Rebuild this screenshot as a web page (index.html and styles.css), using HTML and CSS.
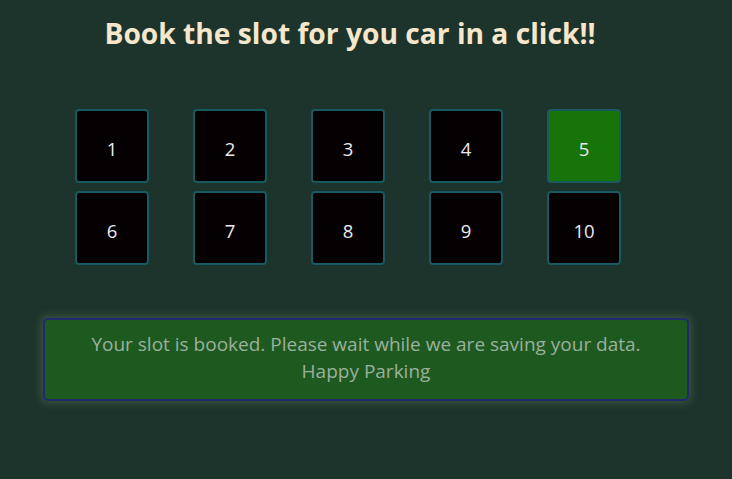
FILE: index.html
```html
<!DOCTYPE html>
<html>
<head>
<meta charset="utf-8">
<link rel="stylesheet" href="styles.css">
</head>
<body>
<div class="page">
  <h1 class="title">Book the slot for you car in a click!!</h1>
  <div class="slots">
    <div class="slot">1</div>
    <div class="slot">2</div>
    <div class="slot">3</div>
    <div class="slot">4</div>
    <div class="slot booked">5</div>
    <div class="slot">6</div>
    <div class="slot">7</div>
    <div class="slot">8</div>
    <div class="slot">9</div>
    <div class="slot">10</div>
  </div>
  <div class="message">Your slot is booked. Please wait while we are saving your data.<br>Happy Parking</div>
</div>
</body>
</html>
```
FILE: styles.css
```css
html, body {
  margin: 0;
  padding: 0;
  background: #1d342c;
  height: 100%;
}
.page {
  font-family: "Open Sans", "Noto Sans", sans-serif;
  padding-top: 14px;
}
.title {
  width: 700px;
  margin: 0;
  text-align: center;
  font-size: 28.2px;
  line-height: 38px;
  font-weight: 700;
  color: #f6e7cc;
}
.slots {
  display: grid;
  grid-template-columns: repeat(5, 74px);
  grid-auto-rows: 74px;
  column-gap: 44px;
  row-gap: 8px;
  margin: 57px 0 0 75px;
}
.slot {
  box-sizing: border-box;
  border: 2px solid #185a60;
  border-radius: 4px;
  background: #050103;
  color: #eceaf0;
  font-size: 18.5px;
  padding-top: 4px;
  display: flex;
  align-items: center;
  justify-content: center;
}
.slot.booked {
  background: #177409;
}
.message {
  box-sizing: border-box;
  margin: 53px 0 0 43px;
  width: 646px;
  height: 83px;
  border: 2px solid #1f2b6e;
  border-radius: 5px;
  background: #1e5a20;
  box-shadow: 0 0 8px 2px rgba(120, 150, 110, 0.35);
  color: #9bb09c;
  font-size: 19px;
  line-height: 27px;
  text-align: center;
  padding-top: 11px;
}
```
